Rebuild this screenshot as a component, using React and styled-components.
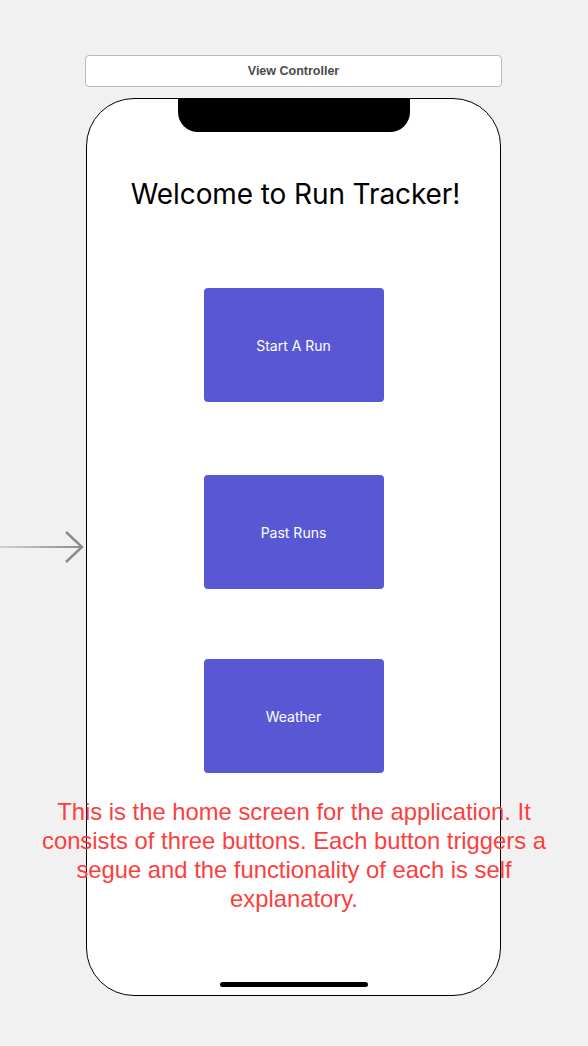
import styled, { createGlobalStyle } from "styled-components";

const GlobalStyle = createGlobalStyle`
  html, body {
    margin: 0;
    padding: 0;
    background: #f1f1f1;
  }
  body {
    font-family: "Liberation Sans", Arial, sans-serif;
  }
`;

const Canvas = styled.div`
  width: 588px;
  height: 1046px;
  padding-top: 55px;
  box-sizing: border-box;
  position: relative;
  overflow: hidden;
`;

const SceneHeader = styled.div`
  margin-left: 85px;
  width: 417px;
  height: 32px;
  box-sizing: border-box;
  background: #fff;
  border: 1px solid #b9b9b9;
  border-radius: 4px;
  display: flex;
  align-items: center;
  justify-content: center;
  font-family: "Liberation Sans", Arial, sans-serif;
  font-weight: 700;
  font-size: 12.5px;
  color: #4a4a4a;
`;

const SceneRow = styled.div`
  display: flex;
  align-items: center;
  margin-top: 11px;
`;

const EntryArrow = styled.svg`
  width: 86px;
  height: 40px;
  flex-shrink: 0;
  display: block;
`;

const Phone = styled.div`
  position: relative;
  width: 415px;
  height: 898px;
  box-sizing: border-box;
  background: #fff;
  border: 1px solid #000;
  border-radius: 48px;
  display: flex;
  flex-direction: column;
  align-items: center;
`;

const Notch = styled.div`
  width: 232px;
  height: 34px;
  margin-top: -1px;
  background: #000;
  border-radius: 0 0 20px 20px;
  flex-shrink: 0;
`;

const Title = styled.h1`
  margin: 45px 0 0 4px;
  font-family: Inter, "Noto Sans", sans-serif;
  font-weight: 400;
  font-size: 28px;
  line-height: 34px;
  color: #000;
  letter-spacing: -0.1px;
`;

const ButtonStack = styled.div`
  margin-top: 77px;
  display: flex;
  flex-direction: column;
`;

const ActionButton = styled.button`
  width: 180px;
  height: 114px;
  margin-top: ${(p) => p.$gap || 0}px;
  border: none;
  border-radius: 4px;
  background: #5958d4;
  color: #fff;
  font-family: Inter, "Noto Sans", sans-serif;
  font-size: 14px;
  cursor: pointer;
`;

const HomeIndicator = styled.div`
  margin-top: auto;
  margin-bottom: 8px;
  width: 148px;
  height: 5px;
  border-radius: 3px;
  background: #000;
`;

const Annotation = styled.p`
  position: absolute;
  left: 23px;
  top: 797px;
  width: 542px;
  margin: 0;
  text-align: center;
  font-family: "Liberation Sans", Arial, sans-serif;
  font-size: 23.8px;
  line-height: 29px;
  color: #fc3e3e;
`;

export default function App() {
  return (
    <>
      <GlobalStyle />
      <Canvas>
        <SceneHeader>View Controller</SceneHeader>
        <SceneRow>
          <EntryArrow viewBox="0 0 86 40">
            <defs>
              <linearGradient
                id="arrowFade"
                gradientUnits="userSpaceOnUse"
                x1="0"
                y1="20"
                x2="82"
                y2="20"
              >
                <stop offset="0" stopColor="#8a8a8a" stopOpacity="0.3" />
                <stop offset="1" stopColor="#8a8a8a" stopOpacity="1" />
              </linearGradient>
            </defs>
            <line x1="0" y1="20" x2="82" y2="20" stroke="url(#arrowFade)" strokeWidth="2" />
            <polyline
              points="66,5 82,20 66,35"
              fill="none"
              stroke="#8a8a8a"
              strokeWidth="2.4"
            />
          </EntryArrow>
          <Phone>
            <Notch />
            <Title>Welcome to Run Tracker!</Title>
            <ButtonStack>
              <ActionButton>Start A Run</ActionButton>
              <ActionButton $gap={73}>Past Runs</ActionButton>
              <ActionButton $gap={70}>Weather</ActionButton>
            </ButtonStack>
            <HomeIndicator />
          </Phone>
        </SceneRow>
        <Annotation>
          This is the home screen for the application. It consists of three
          buttons. Each button triggers a segue and the functionality of each is
          self explanatory.
        </Annotation>
      </Canvas>
    </>
  );
}
